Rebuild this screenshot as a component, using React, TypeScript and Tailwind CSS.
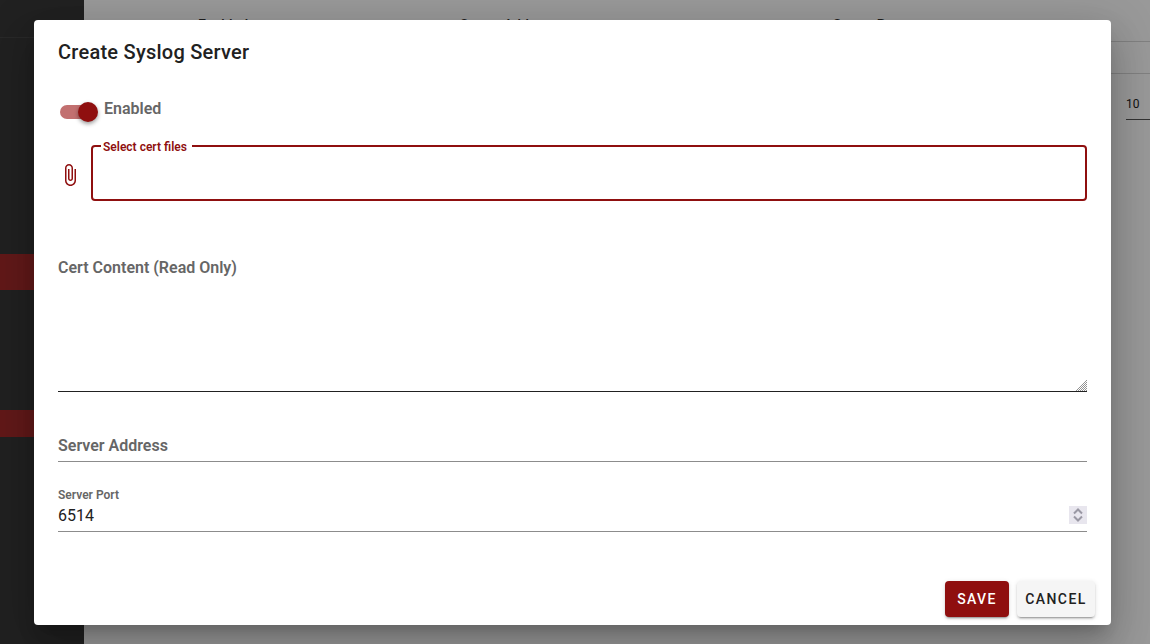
const roboto = "font-['Roboto',sans-serif]";

function AttachIcon() {
  return (
    <svg viewBox="0 0 24 24" className="w-6 h-6 mt-1 shrink-0 fill-[#8f0f0f]">
      <path d="M16.5 6v11.5c0 2.21-1.79 4-4 4s-4-1.79-4-4V5c0-1.38 1.12-2.5 2.5-2.5s2.5 1.12 2.5 2.5v10.5c0 .55-.45 1-1 1s-1-.45-1-1V6H10v9.5c0 1.38 1.12 2.5 2.5 2.5s2.5-1.12 2.5-2.5V5c0-2.21-1.79-4-4-4S7 2.79 7 5v12.5c0 3.04 2.46 5.5 5.5 5.5s5.5-2.46 5.5-5.5V6h-1.5z" />
    </svg>
  );
}

function Spinner() {
  return (
    <div className="w-[18px] h-[18px] self-start bg-[#e8e6ee] flex items-center justify-center">
      <svg viewBox="0 0 18 18" className="w-[18px] h-[18px] fill-none stroke-[#9a98a4] stroke-2">
        <path d="M5 7.5 9 3.5 13 7.5" />
        <path d="M5 10.5 9 14.5 13 10.5" />
      </svg>
    </div>
  );
}

function ResizeHandle() {
  return (
    <svg viewBox="0 0 11 11" className="absolute right-0 bottom-0 w-[11px] h-[11px] stroke-[#777] stroke-[0.8] pointer-events-none">
      <path d="M0 11 11 0" />
      <path d="M2 11 11 2" />
      <path d="M4 11 11 4" />
      <path d="M6 11 11 6" />
      <path d="M8 11 11 8" />
      <path d="M10 11 11 10" />
    </svg>
  );
}

function Background() {
  return (
    <div className="flex w-full h-full">
      <aside className="w-[84px] shrink-0 bg-[#383838] flex flex-col">
        <div className="h-[38px] border-b border-[#454545]" />
        <div className="h-[36px] mt-[216px] bg-[#a32a2a]" />
        <div className="h-[27px] mt-[120px] bg-[#a32a2a]" />
      </aside>
      <main className="flex-1 bg-white flex flex-col">
        <div className="h-[42px] border-b border-[#d8d8d8] pt-[15px] pl-[114px] flex text-sm font-medium text-[#333]">
          <span className="w-[262px]">Enabled</span>
          <span className="w-[373px]">Server Address</span>
          <span>Server Port</span>
        </div>
        <div className="h-[32px] border-b border-[#d8d8d8]" />
        <div className="flex justify-end pt-[21px] pr-0">
          <span className="w-[24px] h-[25px] border-b border-[#555] text-xs leading-[18px] text-[#222]">10</span>
        </div>
      </main>
    </div>
  );
}

export default function App() {
  return (
    <div className={`relative w-[1150px] h-[644px] overflow-hidden ${roboto}`}>
      <Background />
      <div className="absolute inset-0 bg-black/40" />

      <div className="absolute left-[34px] top-[20px] w-[1077px] h-[605px] bg-white rounded flex flex-col shadow-[0_11px_15px_-7px_rgba(0,0,0,0.2),0_24px_38px_3px_rgba(0,0,0,0.14),0_9px_46px_8px_rgba(0,0,0,0.12)]">
        <div className="px-6 pt-[18px]">
          <h2 className="text-xl leading-[28px] font-medium text-[#212121] tracking-[0.25px]">Create Syslog Server</h2>

          <div className="flex items-center mt-[29px] h-[28px]">
            <div className="relative w-[36px] h-[14px] ml-[2px] mt-[5px] rounded-full bg-[#c27070]">
              <span className="absolute -right-[2px] -top-[3px] w-5 h-5 rounded-full bg-[#8f0f0f] shadow-[0_2px_4px_rgba(0,0,0,0.4)]" />
            </div>
            <span className="ml-[8px] text-base font-semibold text-[#666666]">Enabled</span>
          </div>

          <div className="flex items-center mt-[22px]">
            <AttachIcon />
            <fieldset className="ml-[9px] flex-1 h-[62px] -mt-[6px] border-2 border-[#8f0f0f] rounded px-[8px]">
              <legend className="pl-[2px] pr-[5px] text-xs leading-[14px] font-semibold text-[#8f0f0f]">
                <span className="inline-block translate-y-px">Select cert files</span>
              </legend>
            </fieldset>
          </div>

          <div className="relative mt-[53px] h-[138px] border-b border-[#212121]">
            <span className="absolute left-0 top-[2px] text-base font-semibold text-[#666666]">Cert Content (Read Only)</span>
            <textarea readOnly className="block w-full h-full bg-transparent outline-none resize-none" />
            <ResizeHandle />
          </div>

          <div className="mt-[42px] h-[28px] border-b border-[#8c8c8c] text-base leading-[24px] font-semibold text-[#666666]">
            Server Address
          </div>

          <div className="mt-[26px] h-[44px] border-b border-[#8c8c8c] flex flex-col">
            <span className="text-xs leading-[14px] font-semibold text-[#666666]">Server Port</span>
            <div className="flex items-center justify-between mt-[4px]">
              <span className="text-base leading-[20px] text-[#212121]">6514</span>
              <Spinner />
            </div>
          </div>
        </div>

        <div className="mt-auto flex justify-end gap-2 pr-4 pb-2">
          <button className="w-[64px] h-[36px] rounded bg-[#8f0f0f] text-white text-sm font-medium tracking-[1.4px] shadow-[0_3px_1px_-2px_rgba(0,0,0,0.2),0_2px_2px_rgba(0,0,0,0.14),0_1px_5px_rgba(0,0,0,0.12)]">
            SAVE
          </button>
          <button className="w-[78px] h-[36px] rounded bg-[#f5f5f5] text-[#212121] text-sm font-medium tracking-[1.4px] shadow-[0_3px_1px_-2px_rgba(0,0,0,0.2),0_2px_2px_rgba(0,0,0,0.14),0_1px_5px_rgba(0,0,0,0.12)]">
            CANCEL
          </button>
        </div>
      </div>
    </div>
  );
}
